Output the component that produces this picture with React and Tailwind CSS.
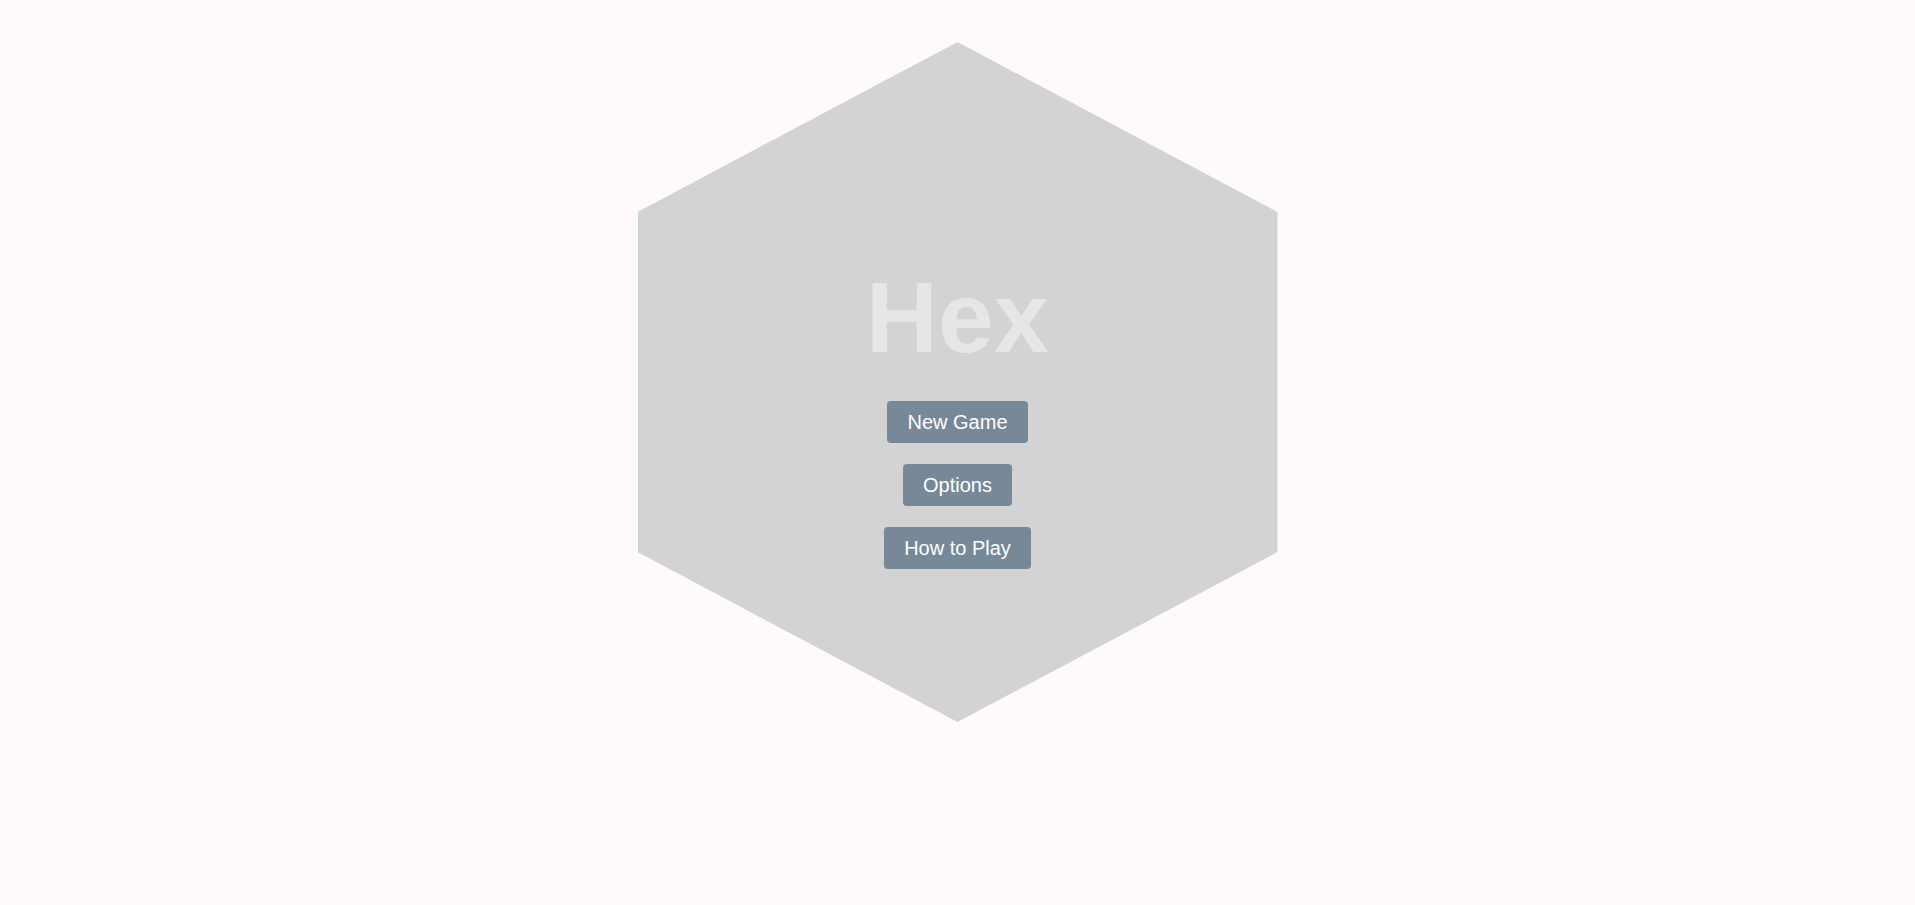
import React from "react";

const items = ["New Game", "Options", "How to Play"];

export default function App() {
  return (
    <div className="min-h-screen bg-[#fffafa] pt-[42px] font-['Liberation_Sans',Arial,sans-serif]">
      <div className="mx-auto flex h-[680px] w-[640px] flex-col items-center bg-[#d3d3d3] pt-[225px] [clip-path:polygon(50%_0,100%_25%,100%_75%,50%_100%,0_75%,0_25%)]">
        <h1 className="text-[100px] font-bold leading-none text-[#e6e6e6]">Hex</h1>
        <div className="mt-[34px] flex flex-col items-center gap-[21px]">
          {items.map((label) => (
            <button
              key={label}
              type="button"
              className="h-[42px] rounded-[4px] bg-[#778899] px-5 text-[20px] leading-[23px] text-white"
            >
              {label}
            </button>
          ))}
        </div>
      </div>
    </div>
  );
}
